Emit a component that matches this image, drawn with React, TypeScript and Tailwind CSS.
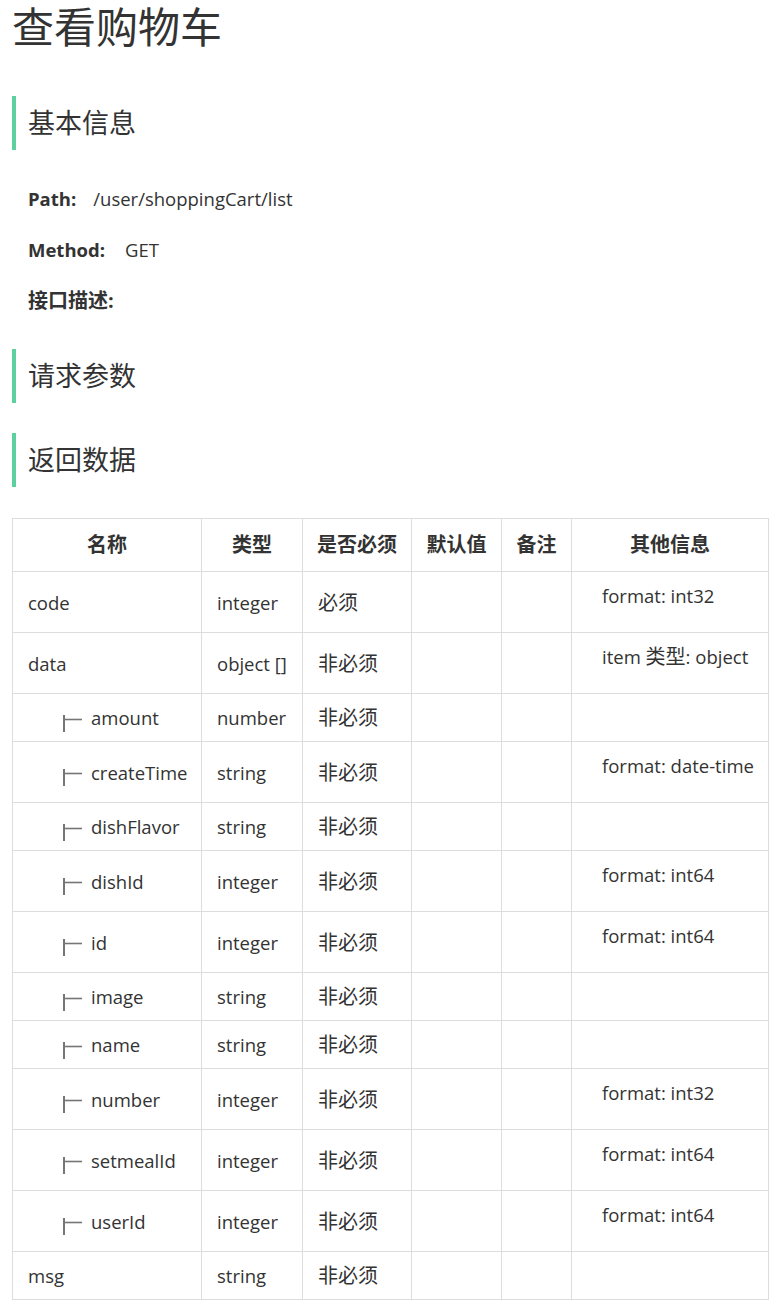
import React from "react";

type Row = {
  name: string;
  type: string;
  required: string;
  other?: React.ReactNode;
  child?: boolean;
};

const Cjk = ({ children }: { children: React.ReactNode }) => (
  <span className="text-[20px]">{children}</span>
);

const rows: Row[] = [
  { name: "code", type: "integer", required: "必须", other: "format: int32" },
  {
    name: "data",
    type: "object []",
    required: "非必须",
    other: (
      <>
        item <Cjk>类型</Cjk>: object
      </>
    ),
  },
  { name: "amount", type: "number", required: "非必须", child: true },
  { name: "createTime", type: "string", required: "非必须", other: "format: date-time", child: true },
  { name: "dishFlavor", type: "string", required: "非必须", child: true },
  { name: "dishId", type: "integer", required: "非必须", other: "format: int64", child: true },
  { name: "id", type: "integer", required: "非必须", other: "format: int64", child: true },
  { name: "image", type: "string", required: "非必须", child: true },
  { name: "name", type: "string", required: "非必须", child: true },
  { name: "number", type: "integer", required: "非必须", other: "format: int32", child: true },
  { name: "setmealId", type: "integer", required: "非必须", other: "format: int64", child: true },
  { name: "userId", type: "integer", required: "非必须", other: "format: int64", child: true },
  { name: "msg", type: "string", required: "非必须" },
];

function SectionTitle({ children, className }: { children: React.ReactNode; className?: string }) {
  return (
    <h2
      className={`h-[54px] border-l-4 border-[#5dd0a0] pl-[12px] flex items-center text-[27px] text-[#333] font-normal ${className ?? ""}`}
    >
      {children}
    </h2>
  );
}

// the little "├─" drawn in front of child fields
function TreeMark() {
  return (
    <svg width="28" height="24" viewBox="0 0 28 24" className="shrink-0 overflow-visible">
      <line x1="1" y1="9" x2="1" y2="26" stroke="#767676" strokeWidth="2" />
      <line x1="1" y1="13.5" x2="19" y2="13.5" stroke="#767676" strokeWidth="1.6" />
    </svg>
  );
}

export default function App() {
  const cell = "border border-[#dddddd] px-[15px] py-[11px] align-middle leading-[25px]";
  const head = "border border-[#dddddd] px-[6px] py-[13px] text-center font-bold text-[20px] leading-[26px]";

  return (
    <div
      className="bg-white text-[#333] text-[18.5px] pl-[12px] pb-[8px]"
      style={{ fontFamily: '"Open Sans", "Noto Sans CJK SC", sans-serif' }}
    >
      <h1 className="text-[42px] leading-[52px] font-normal mt-[1px]">查看购物车</h1>

      <SectionTitle className="mt-[43px]">基本信息</SectionTitle>

      <div className="pl-[16px] mt-[36px] flex flex-col gap-[25px] leading-[26px]">
        <p>
          <span className="font-bold">Path:</span>
          <span className="ml-[17px]">/user/shoppingCart/list</span>
        </p>
        <p>
          <span className="font-bold">Method:</span>
          <span className="ml-[20px]">GET</span>
        </p>
        <p className="text-[20px] font-bold">接口描述:</p>
      </div>

      <SectionTitle className="mt-[35px]">请求参数</SectionTitle>
      <SectionTitle className="mt-[30px]">返回数据</SectionTitle>

      <table className="mt-[31px] w-[757px] table-fixed border-collapse">
        <colgroup>
          <col className="w-[189px]" />
          <col className="w-[101px]" />
          <col className="w-[109px]" />
          <col className="w-[90px]" />
          <col className="w-[70px]" />
          <col className="w-[197px]" />
        </colgroup>
        <thead>
          <tr>
            <th className={head}>名称</th>
            <th className={head}>类型</th>
            <th className={head}>是否必须</th>
            <th className={head}>默认值</th>
            <th className={head}>备注</th>
            <th className={head}>其他信息</th>
          </tr>
        </thead>
        <tbody>
          {rows.map((r) => (
            <tr key={r.name}>
              <td className={cell}>
                {r.child ? (
                  <div className="flex items-center pl-[35px]">
                    <TreeMark />
                    <span>{r.name}</span>
                  </div>
                ) : (
                  r.name
                )}
              </td>
              <td className={`${cell} whitespace-nowrap`}>{r.type}</td>
              <td className={`${cell} text-[20px]`}>{r.required}</td>
              <td className={cell}></td>
              <td className={cell}></td>
              <td className={`${cell} pl-[30px] whitespace-nowrap`}>
                {r.other && <p className="mb-[13px]">{r.other}</p>}
              </td>
            </tr>
          ))}
        </tbody>
      </table>
    </div>
  );
}
